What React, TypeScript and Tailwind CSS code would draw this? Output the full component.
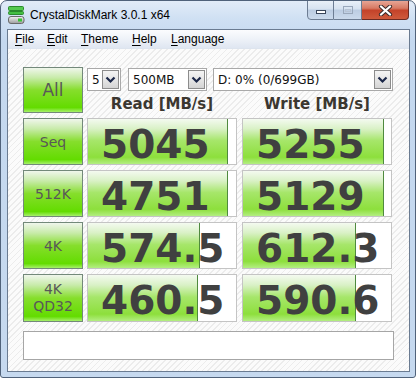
import React from "react";

function Chevron() {
  return (
    <svg width="11" height="8" viewBox="0 0 11 8">
      <path d="M1.5 1.5 L5.5 5.5 L9.5 1.5" fill="none" stroke="#1b2748" strokeWidth="2.2" />
    </svg>
  );
}

function Select({ w, text }: { w: string; text: string }) {
  return (
    <div className={`${w} h-[23px] bg-white border border-[#a9a9a9] flex items-center justify-between pl-[4px] pr-[1px]`}>
      <span className="font-['DejaVu_Sans',sans-serif] text-[12px] text-[#111] leading-none">{text}</span>
      <div className="w-[17px] h-[19px] border border-[#8c8c8c] bg-[linear-gradient(180deg,#f4f4f4_0%,#e6e6e6_50%,#d4d4d4_100%)] flex items-center justify-center">
        <Chevron />
      </div>
    </div>
  );
}

function SideButton({ h, children }: { h: string; children: React.ReactNode }) {
  return (
    <div
      className={`w-[60px] ${h} shrink-0 border border-[#73897a] bg-[linear-gradient(180deg,#f0f6ec_0%,#c8ebaa_22%,#86de2c_50%,#63dc00_90%,#a6f06a_100%)] flex flex-col items-center justify-center text-[#585858] font-['DejaVu_Sans',sans-serif] leading-none`}
    >
      {children}
    </div>
  );
}

function Bar({ value, fill }: { value: string; fill: number }) {
  return (
    <div className="relative w-[150px] h-full border border-[#c4c4c4] bg-white">
      <div
        className="absolute left-0 top-0 bottom-0 border-r border-[#4f8a3e] bg-[linear-gradient(180deg,#f4faf0_0%,#d9f1c6_22%,#a6e66a_48%,#8ddf3c_85%,#b3ee82_100%)]"
        style={{ width: fill }}
      />
      <div className="relative pl-[13px] pt-[6px] text-[39px] font-bold leading-none text-[#404040] font-['DejaVu_Sans',sans-serif]">
        {value}
      </div>
    </div>
  );
}

function Row({
  label,
  h,
  read,
  readFill,
  write,
  writeFill,
}: {
  label: React.ReactNode;
  h: string;
  read: string;
  readFill: number;
  write: string;
  writeFill: number;
}) {
  return (
    <div className={`flex ${h} mt-[5px]`}>
      <SideButton h="h-full">{label}</SideButton>
      <div className="ml-[4px]">
        <Bar value={read} fill={readFill} />
      </div>
      <div className="ml-[5px]">
        <Bar value={write} fill={writeFill} />
      </div>
    </div>
  );
}

export default function App() {
  return (
    <div className="w-[416px] h-[378px] overflow-hidden rounded-t-[7px] rounded-b-[3px] border border-[#50627a] bg-[linear-gradient(180deg,#e2ecf8_0px,#cfe0f3_18px,#c4d8ef_40px,#c6d9ef_100%)] flex flex-col font-['Liberation_Sans',sans-serif]">
      {/* title bar */}
      <div className="h-[28px] flex items-start shrink-0">
        <div className="ml-[7px] mt-[5px]">
          <svg width="17" height="18" viewBox="0 0 17 18">
            <rect x="0.5" y="0.5" width="15" height="4" rx="1" fill="#52c94e" stroke="#2a8a2c" />
            <rect x="0.5" y="5.5" width="15" height="3" rx="1" fill="#44be42" stroke="#2a8a2c" />
            <defs>
              <linearGradient id="drv" x1="0" y1="0" x2="0" y2="1">
                <stop offset="0" stopColor="#f2f2f2" />
                <stop offset="1" stopColor="#9d9d9d" />
              </linearGradient>
            </defs>
            <rect x="0.5" y="10.5" width="15.5" height="7" rx="2.5" fill="url(#drv)" stroke="#6a6a6a" />
            <rect x="10" y="12.5" width="4" height="3" fill="#36c436" />
          </svg>
        </div>
        <div className="ml-[5px] mt-[7px] text-[12px] leading-[14px] text-black">CrystalDiskMark 3.0.1 x64</div>
        <div className="flex-1" />
        <div className="flex -mt-px mr-[6px]">
          <div className="w-[27px] h-[20px] rounded-bl-[4px] border border-[#6d7d93] bg-[linear-gradient(180deg,#e9f0f8_0%,#d6e2f0_45%,#bccde2_50%,#cbdaec_100%)] flex items-end justify-center pb-[5px]">
            <div className="w-[10px] h-[4px] bg-white border border-[#39465a]" />
          </div>
          <div className="w-[28px] h-[20px] border-y border-r border-[#6d7d93] bg-[linear-gradient(180deg,#e9f0f8_0%,#d6e2f0_45%,#bccde2_50%,#cbdaec_100%)] flex items-center justify-center">
            <div className="w-[10px] h-[8px] border border-[#9aa8bb] flex items-center justify-center">
              <div className="w-[6px] h-[3px] border border-[#b8c4d4]" />
            </div>
          </div>
          <div className="w-[47px] h-[20px] rounded-br-[4px] border-y border-r border-[#6b2a22] bg-[linear-gradient(180deg,#e7a595_0%,#d77a64_40%,#c4432a_52%,#cf5a3c_100%)] flex items-center justify-center">
            <svg width="15" height="11" viewBox="0 0 15 11">
              <path d="M3 1.5 L12 9.5 M12 1.5 L3 9.5" stroke="#3a2a2a" strokeWidth="4.2" strokeLinecap="round" />
              <path d="M3 1.5 L12 9.5 M12 1.5 L3 9.5" stroke="#ffffff" strokeWidth="2.3" strokeLinecap="round" />
            </svg>
          </div>
        </div>
      </div>

      {/* client */}
      <div className="ml-[6px] w-[403px] h-[343px] border border-[#6a7b91] bg-white flex flex-col shrink-0">
        {/* menu */}
        <div className="h-[19px] shrink-0 flex items-center text-[12px] text-black bg-[linear-gradient(180deg,#fbfcfe_0%,#eef2f8_50%,#dfe6f1_100%)] border-b border-[#dde4ee]">
          <div className="w-[32px] pl-[7px]"><span className="underline underline-offset-[2px] decoration-[1px]">F</span>ile</div>
          <div className="w-[34px] pl-[7px]"><span className="underline underline-offset-[2px] decoration-[1px]">E</span>dit</div>
          <div className="w-[51px] pl-[7px]"><span className="underline underline-offset-[2px] decoration-[1px]">T</span>heme</div>
          <div className="w-[39px] pl-[7px]"><span className="underline underline-offset-[2px] decoration-[1px]">H</span>elp</div>
          <div className="pl-[7px]"><span className="underline underline-offset-[2px] decoration-[1px]">L</span>anguage</div>
        </div>

        {/* content */}
        <div className="flex-1 pl-[15px] pt-[18px] bg-[repeating-linear-gradient(135deg,#fbfbfb_0px,#fbfbfb_3px,#ececec_3px,#ececec_4.2px)]">
          {/* first row */}
          <div className="flex h-[46px]">
            <SideButton h="h-full">
              <span className="text-[17px]">All</span>
            </SideButton>
            <div className="ml-[4px] flex flex-col">
              <div className="flex mt-[1px]">
                <Select w="w-[34px]" text="5" />
                <div className="ml-[7px]">
                  <Select w="w-[79px]" text="500MB" />
                </div>
                <div className="ml-[6px]">
                  <Select w="w-[180px]" text="D: 0% (0/699GB)" />
                </div>
              </div>
              <div className="flex h-[22px] font-['DejaVu_Sans',sans-serif] font-bold text-[15px] leading-[22px] pt-[2px] text-[#3b3730]">
                <div className="w-[150px] text-center">Read [MB/s]</div>
                <div className="w-[150px] ml-[5px] text-center">Write [MB/s]</div>
              </div>
            </div>
          </div>

          <Row label={<span className="text-[14px]">Seq</span>} h="h-[47px]" read="5045" readFill={140} write="5255" writeFill={141} />
          <Row label={<span className="text-[14px]">512K</span>} h="h-[47px]" read="4751" readFill={140} write="5129" writeFill={141} />
          <Row label={<span className="text-[14px]">4K</span>} h="h-[47px]" read="574.5" readFill={112} write="612.3" writeFill={113} />
          <Row
            label={
              <>
                <span className="text-[14px] leading-[17px]">4K</span>
                <span className="text-[14px] leading-[17px]">QD32</span>
              </>
            }
            h="h-[48px]"
            read="460.5"
            readFill={110}
            write="590.6"
            writeFill={113}
          />

          <div className="mt-[9px] w-[371px] h-[29px] bg-white border border-[#a6a6a6]" />
        </div>
      </div>
    </div>
  );
}
